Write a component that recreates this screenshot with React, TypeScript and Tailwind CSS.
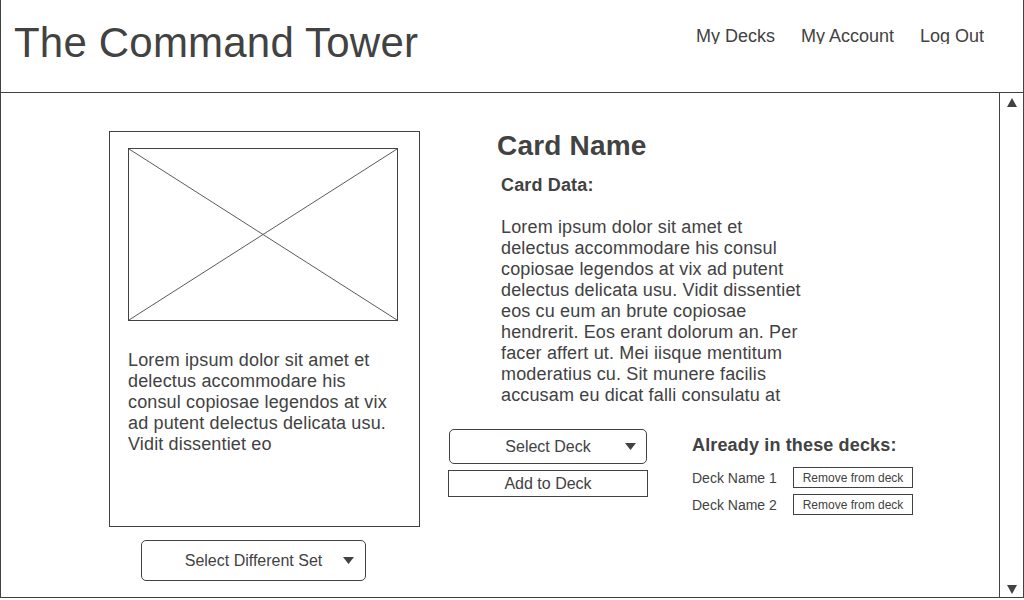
import React from "react";

const font = { fontFamily: '"Liberation Sans", Arial, sans-serif' };

function Tri({ down = true, w = 11, h = 7 }: { down?: boolean; w?: number; h?: number }) {
  return (
    <svg width={w} height={h} viewBox={`0 0 ${w} ${h}`} className="block">
      {down ? (
        <polygon points={`0,0 ${w},0 ${w / 2},${h}`} fill="#424242" />
      ) : (
        <polygon points={`${w / 2},0 ${w},${h} 0,${h}`} fill="#424242" />
      )}
    </svg>
  );
}

export default function App() {
  return (
    <div style={font} className="w-[1024px] h-[600px] bg-white text-[#424242] overflow-hidden">
      <div className="w-[1024px] h-[598px] border-l border-r border-b border-[#424242] flex flex-col">
        {/* Header */}
        <div className="h-[93px] border-b border-[#424242] flex items-start justify-between shrink-0">
          <div className="pl-[13px] mt-[19px] text-[42px] leading-[48px] tracking-[0.2px] whitespace-nowrap">The Command Tower</div>
          <div className="flex gap-[26px] mt-[26px] pr-[39px] text-[18px] leading-[21px]">
            <div className="h-[18px] overflow-hidden whitespace-nowrap">My Decks</div>
            <div className="h-[18px] overflow-hidden whitespace-nowrap">My Account</div>
            <div className="h-[18px] overflow-hidden whitespace-nowrap">Log Out</div>
          </div>
        </div>

        {/* Main */}
        <div className="flex flex-1 min-h-0">
          <div className="flex-1 flex pl-[108px] gap-[28px]">
            {/* Left column */}
            <div className="flex flex-col pt-[38px]">
              <div className="w-[311px] h-[396px] border border-[#424242] pl-[18px] pt-[16px]">
                <div className="w-[270px] h-[173px] border border-[#424242]">
                  <svg width="268" height="171" viewBox="0 0 268 171" className="block">
                    <line x1="0" y1="0" x2="268" y2="171" stroke="#5a5a5a" strokeWidth="1" />
                    <line x1="268" y1="0" x2="0" y2="171" stroke="#5a5a5a" strokeWidth="1" />
                  </svg>
                </div>
                <div className="mt-[29px] text-[18px] leading-[21px] tracking-[0.15px] whitespace-nowrap">
                  Lorem ipsum dolor sit amet et<br />
                  delectus accommodare his<br />
                  consul copiosae legendos at vix<br />
                  ad putent delectus delicata usu.<br />
                  Vidit dissentiet eo
                </div>
              </div>
              <div className="ml-[32px] mt-[13px] w-[225px] h-[41px] border border-[#424242] rounded-[5px] grid grid-cols-[1fr_auto_1fr] items-center text-[16px]">
                <div />
                <div className="whitespace-nowrap">Select Different Set</div>
                <div className="flex justify-end pr-[11px]">
                  <Tri />
                </div>
              </div>
            </div>

            {/* Right column */}
            <div className="flex flex-col">
              <div className="ml-[49px] mt-[37px] text-[28px] leading-[32px] font-bold tracking-[0.2px]">Card Name</div>
              <div className="ml-[53px] mt-[13px] text-[18px] leading-[21px] font-bold tracking-[0.15px]">Card Data:</div>
              <div className="ml-[53px] mt-[21px] text-[18px] leading-[21px] tracking-[0.15px] whitespace-nowrap">
                Lorem ipsum dolor sit amet et<br />
                delectus accommodare his consul<br />
                copiosae legendos at vix ad putent<br />
                delectus delicata usu. Vidit dissentiet<br />
                eos cu eum an brute copiosae<br />
                hendrerit. Eos erant dolorum an. Per<br />
                facer affert ut. Mei iisque mentitum<br />
                moderatius cu. Sit munere facilis<br />
                accusam eu dicat falli consulatu at
              </div>
              <div className="mt-[23px] flex items-start">
                <div className="flex flex-col w-[200px]">
                  <div className="ml-[1px] w-[198px] h-[35px] border border-[#424242] rounded-[5px] grid grid-cols-[1fr_auto_1fr] items-center text-[16px]">
                    <div />
                    <div className="whitespace-nowrap">Select Deck</div>
                    <div className="flex justify-end pr-[10px]">
                      <Tri />
                    </div>
                  </div>
                  <div className="mt-[6px] w-[200px] h-[27px] border border-[#424242] flex items-center justify-center text-[16px]">
                    Add to Deck
                  </div>
                </div>
                <div className="ml-[44px] mt-[6px] flex flex-col">
                  <div className="text-[18px] leading-[21px] font-bold tracking-[0.15px] whitespace-nowrap">Already in these decks:</div>
                  <div className="mt-[11px] flex flex-col gap-[6px]">
                    <div className="flex items-center">
                      <div className="w-[101px] text-[14px] leading-[16px] whitespace-nowrap">Deck Name 1</div>
                      <div className="w-[120px] h-[21px] border border-[#424242] flex items-center justify-center text-[12px] whitespace-nowrap">
                        Remove from deck
                      </div>
                    </div>
                    <div className="flex items-center">
                      <div className="w-[101px] text-[14px] leading-[16px] whitespace-nowrap">Deck Name 2</div>
                      <div className="w-[120px] h-[21px] border border-[#424242] flex items-center justify-center text-[12px] whitespace-nowrap">
                        Remove from deck
                      </div>
                    </div>
                  </div>
                </div>
              </div>
            </div>
          </div>

          {/* Scrollbar */}
          <div className="w-[24px] border-l border-[#424242] flex flex-col items-center justify-between pt-[5px] pb-[3px] shrink-0">
            <Tri down={false} w={10} h={9} />
            <Tri w={10} h={9} />
          </div>
        </div>
      </div>
    </div>
  );
}
